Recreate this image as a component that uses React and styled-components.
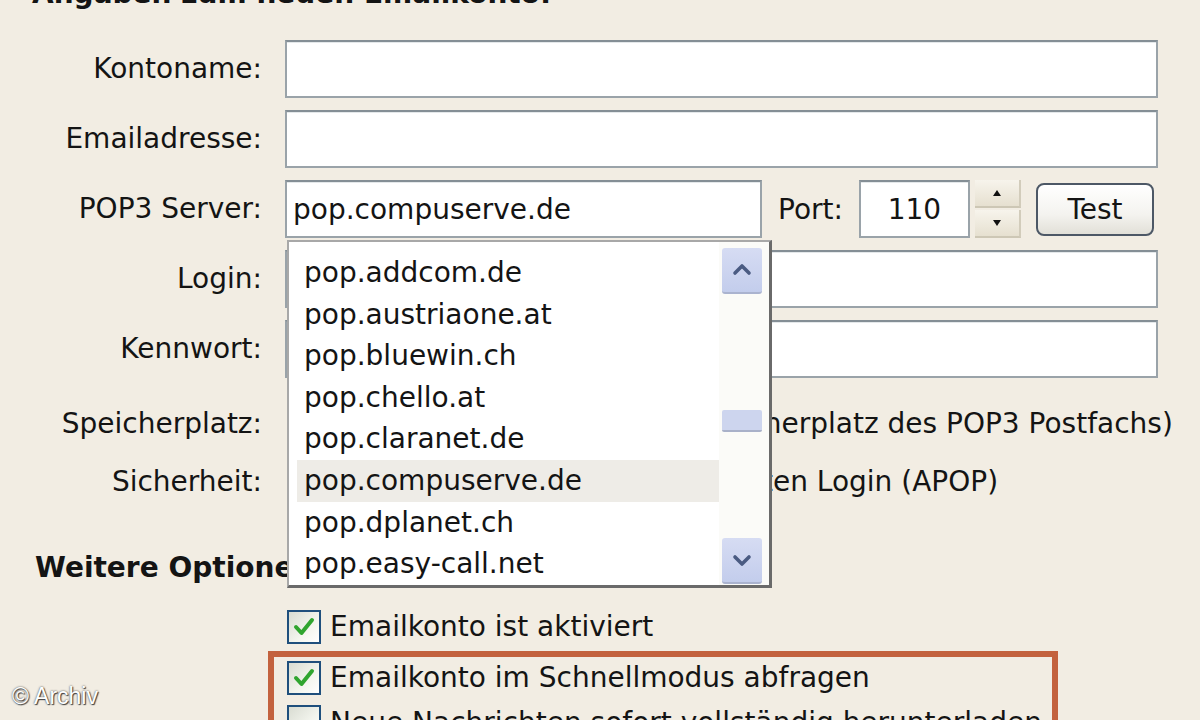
import React from 'react';
import styled, { createGlobalStyle } from 'styled-components';

const servers = [
  'pop.addcom.de',
  'pop.austriaone.at',
  'pop.bluewin.ch',
  'pop.chello.at',
  'pop.claranet.de',
  'pop.compuserve.de',
  'pop.dplanet.ch',
  'pop.easy-call.net',
];

const Check = () => (
  <svg width="24" height="24" viewBox="0 0 24 24">
    <path d="M4 12 L9.5 18 L20 5" fill="none" stroke="#2fa52f" strokeWidth="4" strokeLinecap="round" strokeLinejoin="round" />
  </svg>
);

const Chevron = ({ down }) => (
  <svg width="24" height="24" viewBox="0 0 24 24">
    <polyline
      points={down ? '5,9 12,16 19,9' : '5,15 12,8 19,15'}
      fill="none"
      stroke="#4a5b82"
      strokeWidth="3.6"
      strokeLinecap="round"
      strokeLinejoin="round"
    />
  </svg>
);

const Arrow = ({ down }) => (
  <svg width="10" height="8" viewBox="0 0 10 8">
    <polygon points={down ? '1,1 9,1 5,7' : '1,7 9,7 5,1'} fill="#111" />
  </svg>
);

const App = () => {
  return (
    <Page>
      <GlobalStyle />
      <TopTitle>Angaben zum neuen Emailkonto:</TopTitle>

      <Form>
        <FieldRow>
          <Label>Kontoname:</Label>
          <TextBox />
        </FieldRow>
        <FieldRow>
          <Label>Emailadresse:</Label>
          <TextBox />
        </FieldRow>
        <FieldRow>
          <Label>POP3 Server:</Label>
          <ServerLine>
            <TextBox $width={477}>pop.compuserve.de</TextBox>
            <PortLabel>Port:</PortLabel>
            <TextBox $width={111} $center>110</TextBox>
            <Spinner>
              <SpinButton><Arrow /></SpinButton>
              <SpinButton><Arrow down /></SpinButton>
            </Spinner>
            <TestButton>Test</TestButton>
          </ServerLine>
        </FieldRow>
        <FieldRow>
          <Label>Login:</Label>
          <TextBox />
        </FieldRow>
        <FieldRow>
          <Label>Kennwort:</Label>
          <TextBox />
        </FieldRow>

        <TextRows>
          <FieldRow>
            <Label>Speicherplatz:</Label>
            <Value $pad={59}>Nachrichten auf Server (Speicherplatz des POP3 Postfachs)</Value>
          </FieldRow>
          <FieldRow>
            <Label>Sicherheit:</Label>
            <Value $pad={9}>Anmeldung mit dem verschlüsselten Login (APOP)</Value>
          </FieldRow>
        </TextRows>
      </Form>

      <OptionsTitle>Weitere Optionen</OptionsTitle>

      <Options>
        <CheckRow $indent={19}>
          <CheckBox><Check /></CheckBox>
          Emailkonto ist aktiviert
        </CheckRow>
        <Highlight>
          <CheckRow $indent={13} $height={41}>
            <CheckBox><Check /></CheckBox>
            Emailkonto im Schnellmodus abfragen
          </CheckRow>
          <CheckRow $indent={13} $height={48}>
            <CheckBox />
            Neue Nachrichten sofort vollständig herunterladen
          </CheckRow>
        </Highlight>
      </Options>

      <DropDown>
        <List>
          {servers.map((s) => (
            <Item key={s} $selected={s === 'pop.compuserve.de'}>{s}</Item>
          ))}
        </List>
        <ScrollBar>
          <ScrollButton><Chevron /></ScrollButton>
          <Thumb />
          <ScrollButton $bottom><Chevron down /></ScrollButton>
        </ScrollBar>
      </DropDown>

      <Watermark>© Archiv</Watermark>
    </Page>
  );
};

export default App;

// STYLED COMPONENTS
const GlobalStyle = createGlobalStyle`
  html, body {
    margin: 0;
    padding: 0;
    background: #f2ede3;
  }
  #root {
    width: 1200px;
    height: 720px;
    overflow: hidden;
  }
`;

const Page = styled.div`
  position: relative;
  width: 1200px;
  height: 720px;
  overflow: hidden;
  background: #f2ede3;
  color: #141414;
  font-family: "DejaVu Sans", Verdana, sans-serif;
  font-size: 28px;
`;

const TopTitle = styled.h2`
  margin: -23px 0 1px;
  padding-left: 32px;
  font-size: 28px;
  line-height: 34px;
  font-weight: bold;
  white-space: nowrap;
`;

const Form = styled.div`
  display: flex;
  flex-direction: column;
  gap: 12px;
  padding-top: 28px;
`;

const FieldRow = styled.div`
  display: grid;
  grid-template-columns: 262px 873px;
  column-gap: 23px;
  align-items: center;
  height: 58px;
`;

const Label = styled.div`
  justify-self: end;
  line-height: 34px;
  white-space: nowrap;
`;

const TextBox = styled.div`
  box-sizing: border-box;
  width: ${(p) => (p.$width ? `${p.$width}px` : '100%')};
  height: 58px;
  padding: 0 6px;
  display: flex;
  align-items: center;
  justify-content: ${(p) => (p.$center ? 'center' : 'flex-start')};
  background: #fff;
  border: 2px solid #9aa3a9;
  border-top-color: #848e95;
  box-shadow: inset 0 1px 0 #e4e8ea;
  white-space: nowrap;
`;

const ServerLine = styled.div`
  display: flex;
  align-items: center;
`;

const PortLabel = styled.span`
  margin: 0 16px 0 16px;
`;

const Spinner = styled.div`
  display: flex;
  flex-direction: column;
  gap: 2px;
  width: 46px;
  height: 58px;
  margin-left: 5px;
`;

const SpinButton = styled.div`
  flex: 1;
  display: flex;
  align-items: center;
  justify-content: center;
  background: linear-gradient(180deg, #f7f4ec, #e6e0d0);
  border-right: 2px solid #d2ccbb;
  border-bottom: 2px solid #cdc7b5;
`;

const TestButton = styled.div`
  box-sizing: border-box;
  width: 118px;
  height: 53px;
  margin-left: 15px;
  display: flex;
  align-items: center;
  justify-content: center;
  border: 2px solid #4d5866;
  border-radius: 8px;
  background: linear-gradient(180deg, #ffffff 0%, #f4f3ef 60%, #e2e0d8 100%);
`;

const TextRows = styled.div`
  margin-top: 5px;
  display: flex;
  flex-direction: column;
`;

const Value = styled.div`
  padding-left: ${(p) => p.$pad || 0}px;
  white-space: nowrap;
  line-height: 34px;
`;

const OptionsTitle = styled.h3`
  margin: 40px 0 0;
  padding-left: 35px;
  font-size: 28px;
  line-height: 34px;
  font-weight: bold;
  white-space: nowrap;
`;

const Options = styled.div`
  margin: 17px 0 0 268px;
`;

const CheckRow = styled.div`
  display: flex;
  align-items: center;
  gap: 9px;
  height: ${(p) => p.$height || 49}px;
  padding-left: ${(p) => p.$indent}px;
  white-space: nowrap;
`;

const CheckBox = styled.div`
  box-sizing: border-box;
  width: 34px;
  height: 34px;
  display: flex;
  align-items: center;
  justify-content: center;
  border: 2px solid #1f4f7c;
  background: linear-gradient(135deg, #d9dcd2 0%, #f3f5ee 60%, #ffffff 100%);
`;

const Highlight = styled.div`
  box-sizing: border-box;
  width: 790px;
  height: 200px;
  border: 6px solid #c3623e;
`;

const DropDown = styled.div`
  position: absolute;
  left: 287px;
  top: 240px;
  box-sizing: border-box;
  width: 485px;
  height: 348px;
  display: flex;
  background: #fff;
  border: 2px solid #a8a8a8;
  border-right: 3px solid #6a6a6a;
  border-bottom: 3px solid #6a6a6a;
`;

const List = styled.div`
  flex: 1;
  padding: 10px 0 0 8px;
`;

const Item = styled.div`
  height: 41.6px;
  line-height: 41.6px;
  padding-left: 7px;
  white-space: nowrap;
  background: ${(p) => (p.$selected ? '#eeece7' : 'transparent')};
`;

const ScrollBar = styled.div`
  width: 50px;
  display: flex;
  flex-direction: column;
  padding: 6px 0 1px 3px;
  box-sizing: border-box;
  background: #fbfbf8;
`;

const ScrollButton = styled.div`
  width: 40px;
  height: 46px;
  margin-top: ${(p) => (p.$bottom ? 'auto' : '0')};
  display: flex;
  align-items: center;
  justify-content: center;
  border-radius: 3px;
  background: linear-gradient(180deg, #d6dcf3, #c3cdec);
  border-bottom: 2px solid #aab3cf;
  box-sizing: border-box;
`;

const Thumb = styled.div`
  width: 40px;
  height: 22px;
  margin-top: 116px;
  border-radius: 2px;
  background: #cdd5ee;
  border-bottom: 2px solid #a9b1c9;
  box-sizing: border-box;
`;

const Watermark = styled.div`
  position: absolute;
  left: 12px;
  top: 683px;
  font-family: "Liberation Sans", Arial, sans-serif;
  font-size: 23px;
  color: #fff;
  text-shadow: 0 0 2px #333, 1px 1px 1px #444;
`;
